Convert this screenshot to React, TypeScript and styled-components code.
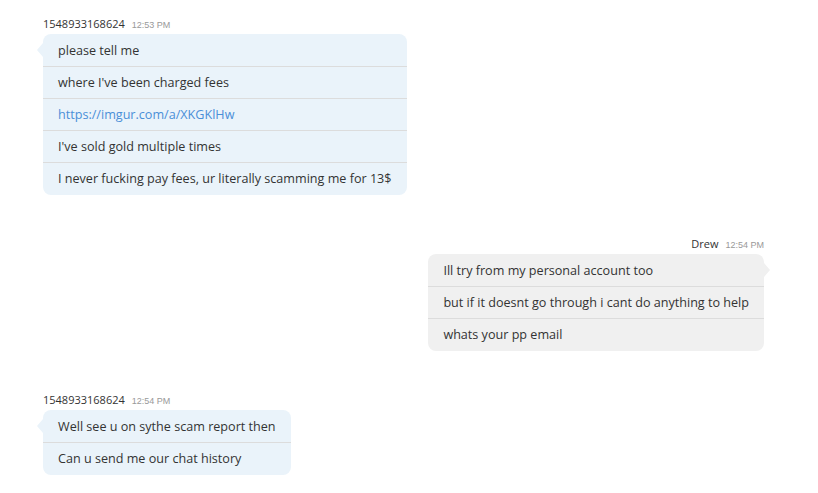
import React from "react";
import styled, { createGlobalStyle, css } from "styled-components";

const Global = createGlobalStyle`
  html, body { margin: 0; padding: 0; background: #ffffff; }
  body { font-family: "Open Sans", "Noto Sans", sans-serif; color: #333; }
`;

const Page = styled.div`
  display: flex;
  flex-direction: column;
  gap: 41px;
  padding: 16px 54px 20px 43px;
  width: 818px;
  box-sizing: border-box;
`;

const Group = styled.div<{ $mine?: boolean }>`
  display: flex;
  flex-direction: column;
  align-items: ${(p) => (p.$mine ? "flex-end" : "flex-start")};
`;

const Header = styled.div`
  display: flex;
  align-items: baseline;
  gap: 7px;
  height: 18px;
`;

const Name = styled.span`
  font-size: 11px;
  color: #333;
`;

const Time = styled.span`
  font-family: "Liberation Sans", Arial, sans-serif;
  font-size: 9px;
  color: #999;
`;

const Bubble = styled.div<{ $mine?: boolean }>`
  position: relative;
  display: flex;
  flex-direction: column;
  padding: 1px 0;
  border-radius: 8px;
  background: ${(p) => (p.$mine ? "#f0f0f0" : "#eaf3fa")};
  &::before {
    content: "";
    position: absolute;
    top: 9px;
    width: 0;
    height: 0;
    border-top: 7px solid transparent;
    border-bottom: 7px solid transparent;
    ${(p) =>
      p.$mine
        ? css`right: -6px; border-left: 6px solid #f0f0f0;`
        : css`left: -6px; border-right: 6px solid #eaf3fa;`}
  }
`;

const Row = styled.div<{ $mine?: boolean }>`
  font-size: 12.6px;
  line-height: 31px;
  padding: 0 15px;
  white-space: nowrap;
  color: #333;
  & + & {
    border-top: 1px solid ${(p) => (p.$mine ? "#dcdcdc" : "#d9e2e8")};
  }
`;

const Link = styled.a`
  color: #4a8fd8;
  text-decoration: none;
`;

const Message: React.FC<{
  mine?: boolean;
  name: string;
  time: string;
  rows: React.ReactNode[];
}> = ({ mine, name, time, rows }) => (
  <Group $mine={mine}>
    <Header>
      <Name>{name}</Name>
      <Time>{time}</Time>
    </Header>
    <Bubble $mine={mine}>
      {rows.map((r, i) => (
        <Row key={i} $mine={mine}>
          {r}
        </Row>
      ))}
    </Bubble>
  </Group>
);

export default function App() {
  return (
    <>
      <Global />
      <Page>
        <Message
          name="1548933168624"
          time="12:53 PM"
          rows={[
            "please tell me",
            "where I've been charged fees",
            <Link href="#">https://imgur.com/a/XKGKlHw</Link>,
            "I've sold gold multiple times",
            "I never fucking pay fees, ur literally scamming me for 13$",
          ]}
        />
        <Message
          mine
          name="Drew"
          time="12:54 PM"
          rows={[
            "Ill try from my personal account too",
            "but if it doesnt go through i cant do anything to help",
            "whats your pp email",
          ]}
        />
        <Message
          name="1548933168624"
          time="12:54 PM"
          rows={["Well see u on sythe scam report then", "Can u send me our chat history"]}
        />
      </Page>
    </>
  );
}
